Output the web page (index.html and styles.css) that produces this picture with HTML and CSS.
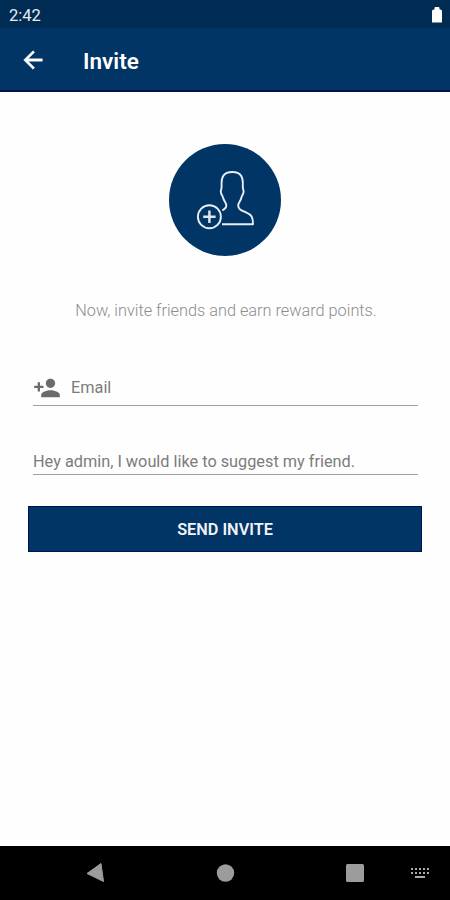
FILE: index.html
```html
<!DOCTYPE html>
<html lang="en">
<head>
    <meta charset="UTF-8">
    <meta name="viewport" content="width=device-width, initial-scale=1.0">
    <title>Invite</title>
    <link rel="stylesheet" href="styles.css">
</head>
<body>

<!-- Status bar -->
<div class="status-bar">
    <span class="clock">2:42</span>
    <svg class="battery" width="10" height="16" viewBox="0 0 10 16">
        <path d="M0 4.2Q0 2.5 1.7 2.5H2.5V1Q2.5 0 3.5 0H6.5Q7.5 0 7.5 1V2.5H8.3Q10 2.5 10 4.2V15.5H0Z" fill="#fff"/>
    </svg>
</div>

<!-- Toolbar -->
<header class="toolbar">
    <svg class="back" width="28" height="28" viewBox="0 0 24 24">
        <path d="M20 11H7.83l5.59-5.59L12 4l-8 8 8 8 1.41-1.41L7.83 13H20v-2z" fill="#fff" stroke="#fff" stroke-width="0.4"/>
    </svg>
    <h1>Invite</h1>
</header>

<main class="content">
    <svg class="hero" width="112" height="112" viewBox="0 0 112 112">
        <circle cx="56" cy="56" r="56" fill="#003566"/>
        <g fill="none" stroke="#e9edf6" stroke-width="1.9" stroke-linejoin="round">
            <path d="M53 80.3H84C84.2 73.5 82.5 70.5 77 68.3C72.5 66.5 69.2 65.5 69.2 61.5C69.2 58.5 71.5 57.5 72.5 53.5C72.8 51.2 74.6 50.5 74.6 47.5C74.6 45.5 73.6 45 73.8 42C74.3 33 72 28 63.3 28C54.5 28 52.1 33 52.6 42C52.8 45 51.8 45.5 51.8 47.5C51.8 50.5 53.6 51.2 54 53.5C55 57.5 57.3 58.5 57.3 61.5C57.3 64 56 65 53.3 66.3"/>
            <circle cx="40.4" cy="72.7" r="11.5"/>
        </g>
        <path d="M40.4 66.5V78.9M34.2 72.7H46.6" stroke="#dfe4f0" stroke-width="2.5"/>
    </svg>

    <p class="message">Now, invite friends and earn reward points.</p>

    <form class="invite-form">
        <div class="field">
            <svg class="person" width="28" height="28" viewBox="0 0 24 24">
                <path d="M15 12c2.21 0 4-1.79 4-4s-1.79-4-4-4-4 1.79-4 4 1.79 4 4 4zm-9-2V7H4v3H1v2h3v3h2v-3h3v-2H6zm9 4c-2.67 0-8 1.34-8 4v2h16v-2c0-2.66-5.33-4-8-4z" fill="#6b6b6b"/>
            </svg>
            <input type="email" placeholder="Email">
        </div>
        <div class="field note">
            <input type="text" placeholder="Hey admin, I would like to suggest my friend.">
        </div>
        <button type="button">SEND INVITE</button>
    </form>
</main>

<!-- System navigation -->
<nav class="nav-bar">
    <svg width="450" height="54" viewBox="0 0 450 54" fill="#9c9c9c">
        <path d="M87 27.5L101 17.5L103.500 35.500Z" stroke="#9c9c9c" stroke-width="1" stroke-linejoin="round"/>
        <circle cx="225.500" cy="27" r="8.700"/>
        <rect x="346" y="18" width="18" height="18" rx="1.500"/>
        <g fill="#aaa">
            <path d="M411 22h2v2h-2zM415 22h2v2h-2zM419 22h2v2h-2zM423 22h2v2h-2zM427 22h2v2h-2z"/>
            <path d="M411 26h2v2h-2zM415 26h2v2h-2zM419 26h2v2h-2zM423 26h2v2h-2zM427 26h2v2h-2z"/>
            <path d="M415 30h10v2h-10z"/>
        </g>
    </svg>
</nav>

</body>
</html>
```
FILE: styles.css
```css
* {
    box-sizing: border-box;
}

body {
    font-family: Roboto, 'Liberation Sans', sans-serif;
    background: #fefefe;
    margin: 0;
    height: 100vh;
    overflow: hidden;
    display: flex;
    flex-direction: column;
}

/* Top bars */
.status-bar {
    height: 28px;
    padding: 1px 8px 0 9px;
    background: #002b52;
    color: #e8ecf2;
    font-size: 16.5px;
    display: flex;
    align-items: center;
    justify-content: space-between;
}

.clock {
    padding-top: 1px;
}

.toolbar {
    height: 64px;
    padding: 1px 19px 0;
    background: #003566;
    border-bottom: 2px solid #00134f;
    color: #fff;
    display: flex;
    align-items: center;
    gap: 36px;
}

h1 {
    margin: 0;
    padding-top: 2px;
    font-size: 22.5px;
    font-weight: 600;
}

/* Page */
.content {
    flex: 1;
    padding-top: 52px;
    display: flex;
    flex-direction: column;
    align-items: center;
}

.message {
    margin: 44px 0 0;
    padding-left: 2px;
    line-height: 22px;
    font-size: 16.3px;
    font-weight: 300;
    color: #8c8c8c;
    white-space: nowrap;
}

.invite-form {
    width: 394px;
    margin-top: 50px;
}

.field {
    height: 34px;
    margin: 0 4px 0 5px;
    padding-bottom: 2px;
    border-bottom: 1.5px solid #a0a0a0;
    display: flex;
    align-items: center;
    gap: 10px;
}

.note {
    margin-top: 35px;
    padding: 8px 0 0;
}

input {
    flex: 1;
    min-width: 0;
    padding: 0;
    border: none;
    outline: none;
    background: none;
    font-family: inherit;
    font-size: 16.3px;
}

input::placeholder {
    color: #7c7c7c;
    opacity: 1;
}

button {
    width: 100%;
    height: 46px;
    margin-top: 31px;
    padding: 1px 0 0;
    border: 1px solid #001354;
    background: #003566;
    color: #f1f3f8;
    font-family: inherit;
    font-size: 16.3px;
    font-weight: 600;
}

/* Bottom bar */
.nav-bar {
    height: 54px;
    background: #000;
}

.nav-bar svg {
    display: block;
}
```
